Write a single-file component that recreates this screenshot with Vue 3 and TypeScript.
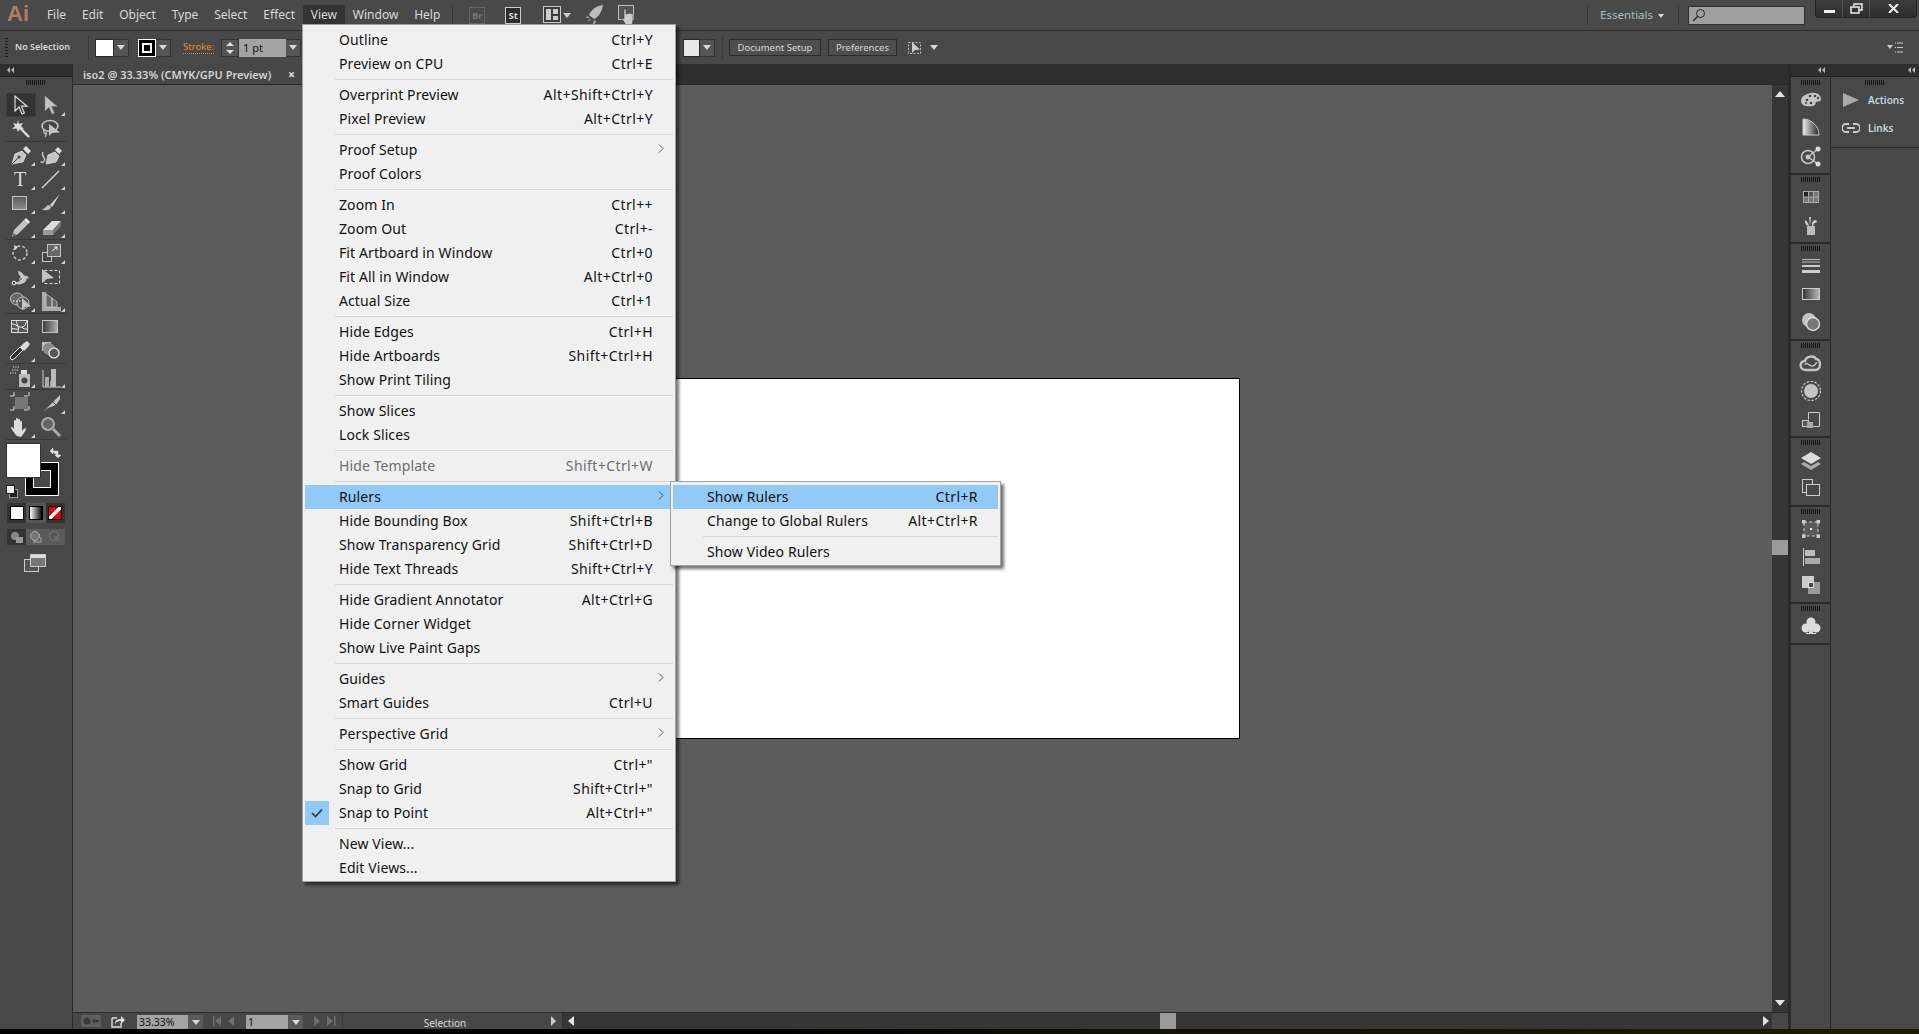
<script setup lang="ts">
type Item = { t?: string; k?: string; sub?: boolean; dis?: boolean; hi?: boolean; chk?: boolean; sep?: boolean }
const S: Item = { sep: true }
const viewMenu: Item[] = [
  { t: 'Outline', k: 'Ctrl+Y' }, { t: 'Preview on CPU', k: 'Ctrl+E' }, S,
  { t: 'Overprint Preview', k: 'Alt+Shift+Ctrl+Y' }, { t: 'Pixel Preview', k: 'Alt+Ctrl+Y' }, S,
  { t: 'Proof Setup', sub: true }, { t: 'Proof Colors' }, S,
  { t: 'Zoom In', k: 'Ctrl++' }, { t: 'Zoom Out', k: 'Ctrl+-' }, { t: 'Fit Artboard in Window', k: 'Ctrl+0' },
  { t: 'Fit All in Window', k: 'Alt+Ctrl+0' }, { t: 'Actual Size', k: 'Ctrl+1' }, S,
  { t: 'Hide Edges', k: 'Ctrl+H' }, { t: 'Hide Artboards', k: 'Shift+Ctrl+H' }, { t: 'Show Print Tiling' }, S,
  { t: 'Show Slices' }, { t: 'Lock Slices' }, S,
  { t: 'Hide Template', k: 'Shift+Ctrl+W', dis: true }, S,
  { t: 'Rulers', sub: true, hi: true }, { t: 'Hide Bounding Box', k: 'Shift+Ctrl+B' },
  { t: 'Show Transparency Grid', k: 'Shift+Ctrl+D' }, { t: 'Hide Text Threads', k: 'Shift+Ctrl+Y' }, S,
  { t: 'Hide Gradient Annotator', k: 'Alt+Ctrl+G' }, { t: 'Hide Corner Widget' }, { t: 'Show Live Paint Gaps' }, S,
  { t: 'Guides', sub: true }, { t: 'Smart Guides', k: 'Ctrl+U' }, S,
  { t: 'Perspective Grid', sub: true }, S,
  { t: 'Show Grid', k: 'Ctrl+"' }, { t: 'Snap to Grid', k: 'Shift+Ctrl+"' }, { t: 'Snap to Point', k: 'Alt+Ctrl+"', chk: true }, S,
  { t: 'New View...' }, { t: 'Edit Views...' }
]
const rulersMenu: Item[] = [
  { t: 'Show Rulers', k: 'Ctrl+R', hi: true }, { t: 'Change to Global Rulers', k: 'Alt+Ctrl+R' }, S, { t: 'Show Video Rulers' }
]
const menus = ['File', 'Edit', 'Object', 'Type', 'Select', 'Effect', 'View', 'Window', 'Help']

const G = '#c4c4c4'
const L = '#dcdcdc'
const arrow = 'M6 3v15l4-4 3 7 2.4-1-3-6.8h5.6z'
const icons: Record<string, string> = {
  sel: `<path d="${arrow}" fill="#333" stroke="${L}" stroke-width="1.2"/>`,
  dsel: `<path d="${arrow}" fill="${G}" stroke="#888" stroke-width=".6"/>`,
  wand: `<path d="M11 11l9 9" stroke="${L}" stroke-width="2.4"/><path d="M9 3l1 4 4-1-2 3 3 3-4-.5L9 15l-1.500-3.500L3 12l3-3-2-3 4 1z" fill="${L}"/>`,
  lasso: `<ellipse cx="11" cy="9" rx="8" ry="5.500" fill="none" stroke="${G}" stroke-width="1.600"/><path d="M5 13c-1 3 1 4 2 3s0 3-1 4" fill="none" stroke="${G}" stroke-width="1.300"/><path d="M10 7v12l3-3 8-.5z" fill="${G}"/>`,
  pen: `<path d="M3 21l3-10 7-3 4 4-3 7z" fill="${G}" stroke="#eee" stroke-width=".7"/><path d="M3 21l6-6" stroke="#444"/><circle cx="10" cy="14" r="1.500" fill="#444"/><path d="M14 6l3-3 5 5-3 3z" fill="${L}"/>`,
  cpen: `<path d="M7 21l2-9 7-3 4 4-3 6z" fill="${G}" stroke="#eee" stroke-width=".7"/><path d="M16 7l3-3 4 4-3 3z" fill="${L}"/><path d="M4 9c-3 5 4 5 1 9-1 2-3 2-3 0" fill="none" stroke="${G}" stroke-width="1.300"/>`,
  type: `<text x="11" y="19" text-anchor="middle" font-family="Liberation Serif, serif" font-size="20" fill="${L}">T</text>`,
  line: `<path d="M3 21L20 4" stroke="${L}" stroke-width="1.200"/>`,
  rect: `<defs><linearGradient id="gr1" x1="0" y1="0" x2="0" y2="1"><stop offset="0" stop-color="#5a5a5a"/><stop offset="1" stop-color="#8d8d8d"/></linearGradient></defs><rect x="3.500" y="5.500" width="14" height="13" fill="url(#gr1)" stroke="${G}"/>`,
  brush: `<path d="M21 3L11 14l2 2z" fill="${L}"/><path d="M10 14c-2 0-3 2-4 3-1 1-3 1-3 1 2 2 8 2 9-2z" fill="${G}"/>`,
  pencil: `<path d="M3 22l2-7L15 5l4 4L9 19z" fill="${G}"/><path d="M15 5l2-2 4 4-2 2z" fill="#eee"/><path d="M3 22l2-4 2 2z" fill="#666"/>`,
  eraser: `<path d="M4 15l9-9h9l-8 9z" fill="#ddd"/><path d="M4 15h10v5H4z" fill="#999"/><path d="M14 15l8-9v5l-8 9z" fill="#777"/>`,
  rotate: `<circle cx="11" cy="12" r="7" fill="none" stroke="${G}" stroke-width="1.500" stroke-dasharray="3 2"/><path d="M5 4l4 2-3 3z" fill="${L}"/>`,
  scale: `<rect x="3.500" y="11.500" width="9" height="9" fill="#444" stroke="${G}"/><rect x="8.500" y="3.500" width="13" height="12" fill="#666" stroke="${G}"/><path d="M13 10l5-4m-3 0h3v3" stroke="#eee" fill="none"/>`,
  warp: `<path d="M5 17c5 1 7-2 7-4s-3-3-3-7c3 0 5 3 7 5 2-1 3 0 4 3-2-1-3 0-3 2-2 3-7 4-10 3z" fill="${G}"/><circle cx="5" cy="18" r="1.800" fill="#333" stroke="#fff"/><circle cx="12" cy="14" r="1.300" fill="#333" stroke="#fff" stroke-width=".7"/>`,
  free: `<rect x="5.500" y="5.500" width="15" height="13" fill="none" stroke="#ddd" stroke-dasharray="3 2"/><path d="M3 4v14l5-4 7-1z" fill="${G}"/>`,
  builder: `<ellipse cx="8" cy="10" rx="6.500" ry="6" fill="#666" stroke="${G}"/><circle cx="14" cy="14" r="6" fill="#555" stroke="${G}"/><path d="M4 12h10" stroke="#fff" stroke-dasharray="1.500 1.500"/><path d="M13 9v12l3-3 6-.5z" fill="${G}"/>`,
  persp: `<path d="M3 3l4 0v15h15v4H3z" fill="#aaa"/><path d="M7 5l6 4v9H7zM13 9l5 4v5h-5z" fill="#666" stroke="#ccc" stroke-width=".8"/>`,
  mesh: `<rect x="2.500" y="5.500" width="16" height="12" fill="#555" stroke="${L}"/><path d="M3 9c5 0 5 4 10 3s3-5 5-6M8 5c-2 4 3 5 1 12M3 14c3-1 5 1 7 0M13 12c1 2 3 2 5 2" fill="none" stroke="#eee"/>`,
  grad: `<defs><linearGradient id="gr2"><stop offset="0" stop-color="#3a3a3a"/><stop offset="1" stop-color="#b0b0b0"/></linearGradient></defs><rect x="3.500" y="5.500" width="15" height="12" fill="url(#gr2)" stroke="${G}"/>`,
  drop: `<path d="M3 21l2-1 9-9-3-3-9 9-1 2z" fill="#333" stroke="#eee"/><path d="M11 8l4-4 3-2 3 3-2 3-4 4z" fill="${L}"/>`,
  blend: `<rect x="3" y="3" width="9" height="9" fill="#bbb"/><circle cx="10" cy="10" r="6" fill="#888"/><circle cx="15" cy="14" r="5" fill="#555" stroke="${L}" stroke-width="1.500"/>`,
  spray: `<rect x="10" y="9" width="11" height="13" fill="#bbb"/><rect x="12" y="5" width="6" height="4" fill="#ddd"/><circle cx="15.500" cy="15.500" r="3" fill="#444"/><path d="M3 5h6M1 8h7M4 2h6" stroke="#ddd" stroke-dasharray="1.200 1.200"/>`,
  graph: `<path d="M4 5v17M4 22h18" stroke="#ccc" fill="none"/><rect x="6" y="12" width="4" height="10" fill="#aaa"/><rect x="11" y="16" width="4" height="6" fill="#999"/><rect x="12" y="4" width="5" height="18" fill="#bbb"/>`,
  artb: `<rect x="6" y="6" width="13" height="12" fill="#777"/><path d="M1 5h20M1 19h20M5 1v22M20 1v22" stroke="#ddd" stroke-dasharray="4 10"/>`,
  slice: `<path d="M4 21L14 11l7-7v4l-4 6-8 3z" fill="${G}"/><path d="M14 11l3 3" stroke="#444"/>`,
  hand: `<path d="M8 21c-2-2-5-6-6-8 0-2 2-1 3 1V6c0-1.500 2-1.500 2 0v4-6c0-1.500 2-1.500 2 0v6-5c0-1.500 2-1.500 2 0v5-3c0-1.500 2-1.500 2 0v9c1-1 3-4 4-2 0 1-3 6-5 8z" fill="${L}"/>`,
  zoom: `<circle cx="9" cy="9" r="6" fill="#666" stroke="#aaa" stroke-width="2"/><path d="M14 14l7 7" stroke="#aaa" stroke-width="3"/>`,
  palette: `<path d="M12 5c7-1 10 3 10 6s-3 2-5 3c-1 2 0 3-3 4-5 1-12 0-12-5s5-7 10-8z" fill="${G}"/><circle cx="8" cy="12" r="1.300" fill="#444"/><circle cx="12" cy="15" r="1.300" fill="#444"/><circle cx="16" cy="8" r="1.300" fill="#444"/><circle cx="11" cy="8" r="1.300" fill="#444"/><circle cx="19" cy="10" r="1.200" fill="#444"/><circle cx="7" cy="15" r="1" fill="#444"/>`,
  spectrum: `<defs><linearGradient id="gr3"><stop offset="0" stop-color="#eee"/><stop offset="1" stop-color="#222"/></linearGradient></defs><path d="M4 3c8 0 16 7 16 16H4z" fill="url(#gr3)" stroke="#ccc"/>`,
  guide: `<circle cx="9" cy="13" r="6.500" fill="none" stroke="${G}" stroke-width="1.600"/><circle cx="9" cy="13" r="2.500" fill="${G}"/><path d="M9 13L19 5M9 13l10 7" stroke="${G}" stroke-width="1.500"/><circle cx="19" cy="5" r="2.500" fill="${L}"/><circle cx="19" cy="20" r="2.500" fill="${L}"/>`,
  swatches: `<rect x="4" y="6" width="16" height="12" fill="#aaa"/><rect x="5" y="7" width="4" height="4.500" fill="#222"/><rect x="10" y="7" width="4" height="4.500" fill="#555"/><rect x="15" y="7" width="4" height="4.500" fill="#777"/><rect x="5" y="12.500" width="4" height="4.500" fill="#777"/><rect x="10" y="12.500" width="4" height="4.500" fill="#777"/><rect x="15" y="12.500" width="4" height="4.500" fill="#777"/>`,
  brushes: `<rect x="8" y="13" width="8" height="9" fill="#bbb"/><path d="M11 13l-1-9h2zM13 13c0-3 0-5 3-6 3 0 2 3 0 3-1 0-2 2-2 3zM10 13c-2 0-5-3-4-6 2 1 3 3 4 6z" fill="#ccc"/>`,
  stroke: `<path d="M3 5.500h18M3 8h18" stroke="#bbb"/><rect x="3" y="11" width="18" height="2" fill="#ccc"/><rect x="3" y="16" width="18" height="3" fill="#ccc"/>`,
  gradient: `<defs><linearGradient id="gr4"><stop offset="0" stop-color="#333"/><stop offset="1" stop-color="#bbb"/></linearGradient></defs><rect x="3.500" y="6.500" width="17" height="11" fill="url(#gr4)" stroke="#ccc"/>`,
  transp: `<circle cx="10" cy="10" r="7" fill="${G}"/><circle cx="14" cy="14" r="6.500" fill="#777" stroke="#ddd" stroke-width="1.400"/>`,
  cc: `<path d="M7 19c-7 0-7-9-1-9 1-5 9-6 11-2 5 0 6 11-1 11z" fill="none" stroke="${G}" stroke-width="2.400"/><path d="M6 14c2-4 5 2 8 1s3-4 4-3" fill="none" stroke="${G}" stroke-width="1.500"/>`,
  appear: `<circle cx="12" cy="12" r="7" fill="${G}"/><circle cx="12" cy="12" r="9.500" fill="none" stroke="${G}" stroke-width="1.200" stroke-dasharray="2.500 1.500"/>`,
  gstyles: `<path d="M9.500 12.500V5.500h11v14h-7" fill="none" stroke="#ccc"/><rect x="3.500" y="13.500" width="6" height="6" fill="#555" stroke="#ccc"/><rect x="8" y="15" width="6" height="6" fill="#aaa"/>`,
  layers: `<path d="M12 4l10 6-10 6-10-6z" fill="${L}"/><path d="M5 14l-3 2 10 6 10-6-3-2-7 4z" fill="#aaa"/>`,
  artboards: `<rect x="3.500" y="3.500" width="10" height="13" fill="none" stroke="#ccc"/><rect x="7.500" y="8.500" width="13" height="11" fill="#474747" stroke="#ccc"/>`,
  transform: `<rect x="5" y="5" width="14" height="14" fill="#5a5a5a" stroke="#ccc" stroke-dasharray="3 2.200"/><rect x="3" y="3" width="3.500" height="3.500" fill="#ccc"/><rect x="17.500" y="3" width="3.500" height="3.500" fill="#ccc"/><rect x="3" y="17.500" width="3.500" height="3.500" fill="#ccc"/><rect x="17.500" y="17.500" width="3.500" height="3.500" fill="#ccc"/><rect x="11" y="11" width="2" height="2" fill="#eee"/>`,
  align: `<path d="M4.500 3v18" stroke="#ccc"/><rect x="6" y="5" width="10" height="6" fill="#bbb"/><rect x="6" y="13" width="15" height="6" fill="#aaa"/>`,
  pathf: `<rect x="3" y="3" width="12" height="12" fill="#ccc"/><rect x="9" y="9" width="12" height="12" fill="#999"/><rect x="9.500" y="9.500" width="5" height="5" fill="#474747" stroke="#ddd"/>`,
  club: `<circle cx="12" cy="8" r="4.500" fill="${L}"/><circle cx="7" cy="14" r="4.500" fill="${L}"/><circle cx="17" cy="14" r="4.500" fill="${L}"/><path d="M11 12h2l1 7h3v1H7v-1h3z" fill="${L}"/>`
}
const toolGroups: [string, boolean][][] = [
  [['sel', false], ['dsel', true], ['wand', false], ['lasso', false]],
  [['pen', true], ['cpen', true], ['type', true], ['line', true], ['rect', true], ['brush', true], ['pencil', true], ['eraser', true]],
  [['rotate', true], ['scale', true], ['warp', true], ['free', false], ['builder', true], ['persp', true]],
  [['mesh', false], ['grad', false], ['drop', true], ['blend', false]],
  [['spray', true], ['graph', true]],
  [['artb', false], ['slice', true], ['hand', true], ['zoom', false]]
]
const dockGroups = [
  ['palette', 'spectrum', 'guide'], ['swatches', 'brushes'], ['stroke', 'gradient', 'transp'],
  ['cc', 'appear', 'gstyles'], ['layers', 'artboards'], ['transform', 'align', 'pathf'], ['club']
]
</script>

<template>
  <div class="app">
    <header class="titlebar">
      <div class="logo">Ai</div>
      <nav class="menubar">
        <span v-for="m in menus" :key="m" class="mi" :class="{ on: m === 'View' }">{{ m }}</span>
      </nav>
      <i class="vsep first"></i>
      <span class="bridge br">Br</span>
      <span class="bridge st">St</span>
      <svg class="tb-layout" width="32" height="18" viewBox="0 0 32 18">
        <rect x=".5" y=".5" width="17" height="16" fill="#3c3c3c" stroke="#ccc" />
        <rect x="3" y="3" width="5" height="11" fill="#ccc" /><rect x="10" y="3" width="5" height="5" fill="#ccc" /><rect x="10" y="10" width="5" height="4" fill="#ccc" />
        <path d="M20 7h8l-4 5z" fill="#ccc" />
      </svg>
      <svg class="tb-rocket" width="18" height="20" viewBox="0 0 18 20">
        <path d="M17 0C10 1 5 5 3 10l5 4C13 12 16 6 17 0zM2 11l-2 2 3 0zM8 15l-1 5 3-3z" fill="#bdbdbd" />
        <path d="M4 13l-3 4 4-2z" fill="#888" />
      </svg>
      <svg class="tb-hand" width="20" height="22" viewBox="0 0 20 22">
        <rect x=".5" y="1.500" width="15" height="14" fill="#555" stroke="#bbb" />
        <path d="M8 21l-4-6c0-1 1-1 2 0V6c0-1.500 2-1.500 2 0v4h1c0-1 2-1 2 0 0-1 2-1 2 0 1-.5 2 0 2 1v5l-1 5z" fill="#ccc" stroke="#333" stroke-width=".5" />
      </svg>
      <div class="tb-right">
        <i class="vsep"></i>
        <span class="essentials">Essentials</span>
        <span class="tri small"></span>
        <i class="vsep"></i>
        <div class="search">
          <svg width="14" height="14" viewBox="0 0 14 14"><circle cx="8.500" cy="5.500" r="4" fill="none" stroke="#222" /><path d="M5.500 8.500L1 13" stroke="#222" stroke-width="1.300" /></svg>
        </div>
        <div class="winbtns">
          <span class="wb min"><i></i></span>
          <span class="wb res">
            <svg width="13" height="11" viewBox="0 0 13 11"><path d="M4 3V1h8v6h-3M1 4h8v6H1z" fill="none" stroke="#eee" stroke-width="1.500" /></svg>
          </span>
          <span class="wb cls">
            <svg width="11" height="9" viewBox="0 0 11 9"><path d="M1 0l9 9M10 0L1 9" stroke="#eee" stroke-width="2" /></svg>
          </span>
        </div>
      </div>
    </header>

    <section class="controlbar">
      <i class="grip-v"></i>
      <span class="nosel">No Selection</span>
      <i class="vsep c"></i>
      <span class="swatch white"></span>
      <span class="ddbtn"><i class="tri"></i></span>
      <span class="swatch stroke-sw"><i></i></span>
      <span class="ddbtn"><i class="tri"></i></span>
      <span class="stroke-lbl">Stroke:</span>
      <span class="spin"><i class="up"></i><i class="dn"></i></span>
      <span class="ptfield">1 pt</span>
      <span class="ddbtn pt"><i class="tri"></i></span>
      <span class="ctl-gap"></span>
      <span class="swatch light"></span>
      <span class="ddbtn"><i class="tri"></i></span>
      <i class="vsep c2"></i>
      <button class="cbtn doc">Document Setup</button>
      <button class="cbtn pref">Preferences</button>
      <svg class="cicon" width="18" height="18" viewBox="0 0 18 18">
        <rect x="2.500" y="3.500" width="12" height="11" fill="none" stroke="#bbb" stroke-dasharray="2 1.500" />
        <path d="M6 3v11l3-3 5-.5z" fill="#ccc" />
      </svg>
      <i class="tri cb"></i>
      <svg class="cmenu" width="16" height="12" viewBox="0 0 16 12">
        <path d="M0 3h6L3 7z" fill="#ccc" /><path d="M8 1h1M8 5.500h1M8 10h1M10 1h6M10 5.500h6M10 10h6" stroke="#ccc" />
      </svg>
    </section>

    <main class="workspace">
      <aside class="tools">
        <div class="pane-head"><i class="dbl"></i></div>
        <div class="grip"></div>
        <template v-for="(g, gi) in toolGroups" :key="gi">
          <div class="tool-grid">
            <span v-for="(t, i) in g" :key="i" class="tool" :class="{ active: t[0] === 'sel' }">
              <svg width="30" height="24" viewBox="-3 0 30 24">
                <g v-html="icons[t[0]]"></g>
                <polygon v-if="t[1]" points="26,23 26,19 22,23" fill="#d0d0d0" />
              </svg>
            </span>
          </div>
          <div class="tool-sep"></div>
        </template>
        <div class="colors">
          <span class="stroke-big"><i></i></span>
          <span class="fill-big"></span>
          <svg class="swap" width="12" height="10" viewBox="0 0 12 10"><path d="M1 3h7v5M0 3l3-3v6zM5 7h6l-3 3z" fill="#ddd" stroke="#ddd" stroke-width=".5" /></svg>
          <svg class="defaults" width="12" height="13" viewBox="0 0 12 13"><rect x="3.500" y="4.500" width="8" height="8" fill="#222" stroke="#999" /><rect x=".5" y=".5" width="8" height="8" fill="#eee" stroke="#222" /></svg>
        </div>
        <div class="modes">
          <span class="mode"><i class="m-white"></i></span>
          <span class="mode mid"><i class="m-grad"></i></span>
          <span class="mode"><i class="m-none"></i></span>
        </div>
        <div class="modes draw">
          <span class="dmode sel"><svg width="14" height="12" viewBox="0 0 14 12"><circle cx="5" cy="5" r="4" fill="#888" /><rect x="6" y="6" width="7" height="6" fill="#999" /></svg></span>
          <span class="dmode"><svg width="14" height="12" viewBox="0 0 14 12"><circle cx="6" cy="5" r="4.500" fill="#777" stroke="#aaa" /><path d="M4 11h8V6" stroke="#aaa" fill="none" /></svg></span>
          <span class="dmode dim"><svg width="14" height="12" viewBox="0 0 14 12"><circle cx="6" cy="5" r="4.500" fill="#555" stroke="#777" /><rect x="6" y="5" width="5" height="5" fill="#666" /></svg></span>
        </div>
        <svg class="screen" width="22" height="18" viewBox="0 0 22 18">
          <rect x=".5" y="5.500" width="14" height="12" fill="#555" stroke="#ccc" />
          <rect x="6.500" y=".5" width="15" height="12" fill="#777" stroke="#ccc" /><rect x="7" y="1" width="14" height="3" fill="#ddd" />
        </svg>
      </aside>

      <div class="center">
        <div class="tabbar">
          <div class="tab"><span>iso2 @ 33.33% (CMYK/GPU Preview)</span><b>×</b></div>
        </div>
        <div class="doc-row">
          <div class="canvas"><div class="artboard"></div></div>
          <div class="vscroll">
            <i class="a-up"></i>
            <div class="track"><i class="thumb"></i></div>
            <i class="a-dn"></i>
          </div>
        </div>
        <div class="statusbar">
          <svg class="st-gear" width="20" height="12" viewBox="0 0 20 12"><rect width="20" height="12" rx="1" fill="#5e5e5e" /><circle cx="6" cy="6" r="3.500" fill="#3a3a3a" /><path d="M11 6l3-3v2h4v2h-4v2z" fill="#3a3a3a" /></svg>
          <svg class="st-share" width="14" height="13" viewBox="0 0 14 13"><path d="M1 3h5M1 3v9h9V8" fill="none" stroke="#ddd" stroke-width="1.400" /><path d="M4 9c0-4 3-5 6-5V1l4 4-4 4V6C8 6 6 6 4 9z" fill="#ddd" /></svg>
          <span class="st-field zoomf">33.33%</span>
          <span class="st-dd"><i class="tri"></i></span>
          <svg class="st-nav first" width="24" height="10" viewBox="0 0 24 10"><path d="M0 0h1.500v10H0zM8 0v10L2 5zM21 0v10l-6-5z" fill="#6e6e6e" /></svg>
          <span class="st-field pagef">1</span>
          <span class="st-dd"><i class="tri"></i></span>
          <svg class="st-nav second" width="24" height="10" viewBox="0 0 24 10"><path d="M1 0v10l6-5zM14 0v10l6-5zM21 0h1.500v10H21z" fill="#6e6e6e" /></svg>
          <i class="st-sep"></i>
          <span class="st-label">Selection</span>
          <i class="st-right"></i>
          <i class="st-sep2"></i>
          <div class="hscroll">
            <i class="h-left"></i>
            <div class="h-track"><i class="h-thumb"></i></div>
            <i class="h-right"></i>
          </div>
          <div class="corner"></div>
        </div>
      </div>

      <aside class="dock">
        <div class="pane-head"><i class="dbl r"></i></div>
        <div v-for="(g, gi) in dockGroups" :key="gi" class="dock-group">
          <div class="grip short"></div>
          <span v-for="ic in g" :key="ic" class="dock-ic">
            <svg width="24" height="24" viewBox="0 0 24 24" v-html="icons[ic]"></svg>
          </span>
        </div>
      </aside>

      <aside class="rightpanel">
        <div class="pane-head"><i class="dbl r2"></i></div>
        <div class="rp-group">
          <div class="grip short"></div>
          <div class="rp-row">
            <svg width="18" height="16" viewBox="0 0 18 16"><path d="M1 1l16 7L1 15z" fill="#aaa" /></svg>
            <span>Actions</span>
          </div>
          <div class="rp-row">
            <svg width="18" height="12" viewBox="0 0 18 12"><path d="M7 2H4a4 4 0 0 0 0 8h3M11 2h3a4 4 0 0 1 0 8h-3M5 6h8" fill="none" stroke="#ccc" stroke-width="1.800" /></svg>
            <span>Links</span>
          </div>
        </div>
      </aside>
    </main>
    <footer class="strip"></footer>

    <ul class="menu view">
      <template v-for="(it, i) in viewMenu" :key="i">
        <li v-if="it.sep" class="sep"></li>
        <li v-else class="row" :class="{ hi: it.hi, dis: it.dis }">
          <span class="chk" :class="{ on: it.chk }">
            <svg v-if="it.chk" width="12" height="10" viewBox="0 0 12 10"><path d="M1 5l3.500 3.500L11 1.500" fill="none" stroke="#333" stroke-width="1.600" /></svg>
          </span>
          <span class="lbl">{{ it.t }}</span>
          <span class="key">{{ it.k }}</span>
          <svg class="chev" v-if="it.sub" width="6" height="9" viewBox="0 0 6 9"><path d="M1 .5l4 4-4 4" fill="none" stroke="#555" /></svg>
        </li>
      </template>
    </ul>

    <ul class="menu rulers">
      <template v-for="(it, i) in rulersMenu" :key="i">
        <li v-if="it.sep" class="sep"></li>
        <li v-else class="row" :class="{ hi: it.hi }">
          <span class="chk"></span>
          <span class="lbl">{{ it.t }}</span>
          <span class="key">{{ it.k }}</span>
        </li>
      </template>
    </ul>
  </div>
</template>

<style>
html, body { margin: 0; padding: 0; background: #000; overflow: hidden; }
</style>

<style scoped>
.app {
  position: relative;
  width: 1919px;
  height: 1034px;
  overflow: hidden;
  display: flex;
  flex-direction: column;
  background: #484848;
  font-family: "Noto Sans", "Open Sans", sans-serif;
  color: #dcdcdc;
}
i { display: block; font-style: normal; }

.titlebar {
  height: 30px;
  flex: none;
  display: flex;
  align-items: center;
  background: #494949;
  border-bottom: 1px solid #2e2e2e;
}
.logo {
  width: 39px;
  padding-left: 7px;
  box-sizing: border-box;
  font: bold 22px "Liberation Sans", sans-serif;
  color: #ae7f5f;
  margin-top: -2px;
}
.menubar { display: flex; align-items: center; font-size: 12px; height: 20px; }
.mi { padding: 0 7.900px; line-height: 20px; color: #dadada; }
.mi.on { background: #333; border-radius: 3px 3px 0 0; }
.vsep { width: 1px; height: 20px; background: #383838; flex: none; }
.vsep.first { margin-left: 4px; }
.bridge {
  width: 16px; height: 17px; border: 1px solid #777; box-sizing: border-box;
  font: bold 9.500px/15px "Noto Sans", sans-serif; text-align: center; flex: none;
}
.br { margin-left: 16px; color: #777; border-color: #666; }
.st { margin-left: 20px; color: #ddd; background: #2c2c2c; border-color: #ccc; }
.tb-layout { margin-left: 22px; flex: none; }
.tb-rocket { margin-left: 11px; flex: none; }
.tb-hand { margin-left: 14px; flex: none; }
.tb-right { margin-left: auto; display: flex; align-items: center; height: 100%; }
.tb-right .vsep { height: 20px; margin-top: -1px; }
.essentials { margin-left: 12px; font-size: 11.500px; color: #a9bcc4; width: 58px; margin-top: -2px; flex: none; }
.tri {
  width: 0; height: 0; border-left: 4px solid transparent; border-right: 4px solid transparent; border-top: 5px solid #d8d8d8;
}
.tri.small { margin: 1px 14px 0 0; border-left-width: 3.500px; border-right-width: 3.500px; border-top-width: 4px; }
.search {
  margin-left: 9px; width: 117px; height: 19px; box-sizing: border-box; background: #9f9f9f; border: 1px solid #2e2e2e;
  display: flex; align-items: center; padding-left: 3px;
}
.winbtns {
  margin-left: 10px; margin-right: 2px; display: flex; height: 18px; align-self: flex-start; border: 1px solid #222; border-top: 0;
  border-radius: 0 0 4px 4px; background: linear-gradient(#3c3c3c, #2e2e2e); box-sizing: border-box; width: 102px;
}
.wb { display: flex; align-items: center; justify-content: center; border-right: 1px solid #555; box-sizing: border-box; }
.wb.min { width: 27px; } .wb.res { width: 27px; } .wb.cls { flex: 1; border-right: 0; }
.wb.min i { width: 11px; height: 3px; background: #eee; margin-top: 5px; }

.controlbar {
  height: 33px;
  flex: none;
  display: flex;
  align-items: center;
  background: #484848;
  box-sizing: border-box;
  padding-left: 5px;
}
.grip-v { width: 3px; height: 20px; background: repeating-linear-gradient(#1e1e1e 0 1px, transparent 1px 3px); flex: none; }
.nosel { margin-left: 7px; width: 73px; font-size: 9px; font-weight: 600; color: #d8d8d8; flex: none; margin-top: -2px; }
.vsep.c { height: 25px; background: #3a3a3a; }
.swatch { width: 19px; height: 18px; box-sizing: border-box; flex: none; border: 1px solid #2a2a2a; }
.swatch.white { margin-left: 6px; background: #fff; }
.swatch.light { background: #e8e8e8; width: 17px; }
.swatch.stroke-sw { margin-left: 9px; width: 18px; background: #000; border: 1px solid #fff; display: flex; align-items: center; justify-content: center; }
.stroke-sw i { width: 6px; height: 6px; border: 2px solid #fff; background: #000; }
.ddbtn { width: 15px; height: 18px; box-sizing: border-box; background: #555; border: 1px solid #333; border-left: 0; display: flex; align-items: center; justify-content: center; flex: none; }
.stroke-lbl { margin-left: 12px; font-size: 9.500px; color: #e08a2e; border-bottom: 1px dotted #e08a2e; line-height: 12px; flex: none; width: 31px; white-space: nowrap; }
.spin { margin-left: 7px; width: 18px; height: 18px; background: #555; border: 1px solid #333; box-sizing: border-box; display: flex; flex-direction: column; align-items: center; justify-content: space-around; flex: none; }
.spin .up { width: 0; height: 0; border: 4px solid transparent; border-top: 0; border-bottom: 4px solid #ddd; }
.spin .dn { width: 0; height: 0; border: 4px solid transparent; border-bottom: 0; border-top: 4px solid #ddd; }
.ptfield { width: 47px; height: 18px; background: #a3a3a3; color: #111; font-size: 11px; line-height: 18px; box-sizing: border-box; padding-left: 4px; flex: none; }
.ddbtn.pt { width: 15px; }
.ctl-gap { width: 382px; flex: none; }
.vsep.c2 { margin-left: 7px; height: 25px; background: #3a3a3a; }
.cbtn {
  height: 17px; padding: 0; box-sizing: border-box; background: #4e4e4e; border: 1px solid #2c2c2c; color: #d8d8d8;
  font: 9.500px/15px "Noto Sans", sans-serif; flex: none; margin-left: 7px; text-align: center;
}
.cbtn.doc { width: 92px; margin-left: 6px; }
.cbtn.pref { width: 69px; }
.cicon { margin-left: 9px; flex: none; }
.tri.cb { margin-left: 6px; }
.cmenu { margin-left: auto; margin-right: 16px; flex: none; }

.workspace { flex: 1; min-height: 0; display: flex; background: #2a2a2a; }
.pane-head { height: 12px; background: #2f2f2f; border-bottom: 1px solid #222; position: relative; flex: none; }
.dbl { position: absolute; left: 7px; top: 3px; width: 0; height: 0; border: 3px solid transparent; border-left: 0; border-right: 3.500px solid #bbb; }
.dbl::after { content: ""; position: absolute; left: 4px; top: -3px; width: 0; height: 0; border: 3px solid transparent; border-left: 0; border-right: 3.500px solid #bbb; }
.dbl.r { left: 27px; }
.dbl.r2 { left: 77px; }
.grip { height: 5px; width: 20px; margin: 3px auto 0; background: repeating-linear-gradient(90deg, #151515 0 1px, transparent 1px 2px); }
.grip.short { width: 20px; }

.tools { width: 72px; flex: none; background: #484848; border-right: 1px solid #2a2a2a; display: flex; flex-direction: column; }
.tools > .grip { margin-bottom: 8px; flex: none; }
.tool-grid { display: grid; grid-template-columns: 30px 30px; grid-auto-rows: 24px; padding-left: 6px; }
.tool { display: block; height: 24px; }
.tool svg { display: block; }
.tool.active { background: #333; box-shadow: inset 0 0 0 1px #3c3c3c; }
.tool-sep { height: 1px; margin: 0 6px 1px; background: #383838; flex: none; }

.colors { position: relative; height: 62px; flex: none; }
.fill-big { position: absolute; left: 6px; top: 2px; width: 35px; height: 35px; background: #fff; border: 1px solid #333; box-sizing: border-box; z-index: 1; }
.stroke-big { position: absolute; left: 25px; top: 21px; width: 34px; height: 34px; background: #000; border: 1px solid #fff; box-sizing: border-box; display: flex; align-items: center; justify-content: center; }
.stroke-big i { width: 16px; height: 16px; border: 1px solid #fff; background: #484848; }
.swap { position: absolute; left: 50px; top: 7px; }
.defaults { position: absolute; left: 6px; top: 44px; }
.modes { width: 58px; height: 20px; margin-left: 7px; background: #333; display: flex; flex: none; }
.mode { flex: 1; display: flex; align-items: center; justify-content: center; }
.mode.mid { background: #555; }
.mode i { width: 12px; height: 12px; border: 1px solid #000; }
.m-white { background: #fff; }
.m-grad { background: linear-gradient(90deg, #fff, #000); }
.m-none { background: linear-gradient(135deg, #e00 0 38%, #fff 38% 62%, #e00 62%); }
.modes.draw { height: 16px; margin-top: 6px; }
.dmode { flex: 1; display: flex; align-items: center; justify-content: center; background: #5a5a5a; }
.dmode.sel { background: #333; }
.screen { margin: 9px 0 0 24px; flex: none; }

.center { flex: 1; min-width: 0; display: flex; flex-direction: column; background: #2e2e2e; }
.tabbar { height: 20px; flex: none; background: #2f2f2f; border-bottom: 1px solid #282828; }
.tab {
  width: 230px; height: 20px; background: #474747; display: flex; align-items: center; box-sizing: border-box; padding-left: 10px;
  font-size: 11px; font-weight: 600; color: #d4d4d4; justify-content: space-between; padding-right: 8px;
}
.tab b { font-size: 12px; }
.doc-row { flex: 1; min-height: 0; display: flex; }
.canvas { flex: 1; position: relative; background: #5c5c5c; }
.artboard { position: absolute; left: 531px; top: 293px; width: 636px; height: 361px; background: #fff; border: 1px solid #000; box-sizing: border-box; }
.vscroll { width: 16px; flex: none; background: #363636; display: flex; flex-direction: column; align-items: center; position: relative; }
.a-up { width: 0; height: 0; border: 5px solid transparent; border-top: 0; border-bottom: 6px solid #e4e4e4; margin-top: 6px; }
.a-dn { width: 0; height: 0; border: 5px solid transparent; border-bottom: 0; border-top: 6px solid #e4e4e4; margin-bottom: 6px; }
.track { flex: 1; width: 100%; position: relative; }
.thumb { position: absolute; left: 0; right: 0; top: 443px; height: 15px; background: #9a9a9a; }

.statusbar { height: 16px; flex: none; display: flex; align-items: center; background: #474747; border-top: 1px solid #2a2a2a; box-sizing: content-box; }
.st-gear { margin-left: 8px; flex: none; }
.st-share { margin-left: 10px; flex: none; }
.st-field { height: 14px; margin-top: 2px; background: #a3a3a3; color: #111; font-size: 10.500px; line-height: 15px; padding-left: 2px; box-sizing: border-box; flex: none; }
.zoomf { width: 51px; margin-left: 12px; }
.pagef { width: 42px; margin-left: 9px; }
.st-dd { width: 15px; height: 14px; margin-top: 2px; background: #5a5a5a; display: flex; align-items: center; justify-content: center; flex: none; }
.st-nav { flex: none; }
.st-nav.first { margin-left: 10px; }
.st-nav.second { margin-left: 10px; }
.st-sep { width: 1px; height: 16px; background: #3a3a3a; margin-left: 5px; flex: none; }
.st-label { width: 204px; text-align: center; font-size: 10px; color: #d8d8d8; flex: none; padding-top: 3px; }
.st-right { width: 0; height: 0; border: 5px solid transparent; border-right: 0; border-left: 5px solid #ccc; flex: none; margin-left: 4px; }
.st-sep2 { width: 1px; height: 16px; background: #2e2e2e; margin-left: 6px; flex: none; }
.hscroll { flex: 1; height: 16px; background: #363636; display: flex; align-items: center; min-width: 0; }
.h-left { width: 0; height: 0; border: 5px solid transparent; border-left: 0; border-right: 6px solid #e4e4e4; margin-left: 5px; flex: none; }
.h-track { flex: 1; height: 16px; position: relative; }
.h-thumb { position: absolute; left: 586px; top: 0; width: 16px; height: 16px; background: #9a9a9a; }
.h-right { width: 0; height: 0; border: 5px solid transparent; border-right: 0; border-left: 6px solid #e4e4e4; margin-right: 3px; flex: none; }
.corner { width: 16px; height: 16px; background: #474747; flex: none; }

.dock { width: 39px; margin-left: 3px; flex: none; background: #484848; display: flex; flex-direction: column; }
.dock-group { border-bottom: 2px solid #2a2a2a; display: flex; flex-direction: column; align-items: center; padding-bottom: 3px; flex: none; }
.dock-group .grip { margin: 2px auto 1px; }
.pane-head + .dock-group .grip { margin-top: 3px; }
.dock-ic { height: 28px; display: flex; align-items: center; justify-content: center; }
.dock-ic svg { display: block; }

.rightpanel { width: 88px; margin-left: 1px; flex: none; background: #484848; }
.rp-group { border-bottom: 1px solid #2a2a2a; height: 68px; box-sizing: border-box; }
.rp-group .grip { margin: 3px auto 1px; }
.rp-row { display: flex; align-items: center; height: 28px; padding-left: 11px; font-size: 10px; font-weight: 600; color: #c6d4de; }
.rp-row span { margin-left: 8px; }
.rp-row svg { flex: none; }

.strip { height: 5px; flex: none; background: linear-gradient(90deg, #000 0 40%, #121200 60%, #1c1c00 100%); }

.menu {
  position: absolute;
  margin: 0;
  padding: 3px 2px;
  list-style: none;
  box-sizing: border-box;
  background: #f0f0f0;
  border: 1px solid #a0a0a0;
  box-shadow: 3px 3px 3px rgba(0, 0, 0, .55);
  color: #111;
  font-size: 14px;
  z-index: 5;
}
.menu.view { left: 302px; top: 24px; width: 374px; height: 858px; }
.menu.rulers { left: 670px; top: 481px; width: 331px; height: 85px; z-index: 6; padding-right: 2px; }
.row { height: 24px; display: flex; align-items: center; position: relative; white-space: nowrap; }
.chk { width: 24px; height: 24px; flex: none; display: flex; align-items: center; justify-content: center; margin-right: 10px; }
.chk.on { background: #91c9f7; }
.lbl { flex: 1; letter-spacing: .1px; margin-top: -2px; }
.key { margin-right: 20px; letter-spacing: .42px; margin-top: -2px; }
.menu.rulers .key { margin-right: 20px; }
.chev { position: absolute; right: 9px; top: 6px; }
.row.hi { background: #91c9f7; }
.row.dis { color: #6d6d6d; }
.sep { height: 1px; background: #d7d7d7; margin: 3px 0 3px 30px; }
</style>
